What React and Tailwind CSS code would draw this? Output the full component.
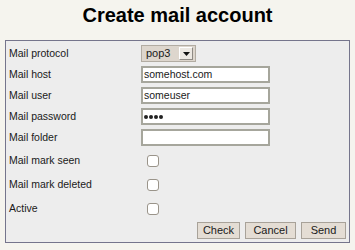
export default function App() {
    const textRows = [
        { label: 'Mail host', value: 'somehost.com' },
        { label: 'Mail user', value: 'someuser' },
        { label: 'Mail password', value: '••••', password: true },
        { label: 'Mail folder', value: '' },
    ];
    const checkRows = ['Mail mark seen', 'Mail mark deleted', 'Active'];

    return (
        <div className="w-[355px] h-[250px] bg-[#f5f4ee] font-['Liberation_Sans',Arial,sans-serif] text-[#1a1a1a] overflow-hidden">
            <h1 className="pt-[4px] h-[40px] text-center text-[20px] leading-[23px] font-bold text-black">Create mail account</h1>

            <div className="ml-[5px] w-[345px] h-[203px] border border-[#75758c] bg-[#ededed] flex flex-col">
                <div className="flex flex-col gap-[4px] pt-[4px]">
                    <div className="flex items-center h-[17px]">
                        <span className="w-[135px] pl-[3px] text-[10.5px]">Mail protocol</span>
                        <div className="flex items-center h-[17px] w-[55px] border border-[#b2aca2] bg-[#ddd6cd]">
                            <span className="flex-1 pl-[4px] text-[11px] leading-none">pop3</span>
                            <div className="w-[14px] h-[13px] mr-[2px] bg-[#ece8e2] border border-[#8e8a84] border-t-white border-l-white flex items-center justify-center">
                                <svg width="7" height="4" viewBox="0 0 7 4"><path d="M0 0h7L3.5 4z" fill="#111" /></svg>
                            </div>
                        </div>
                    </div>
                    {textRows.map(row => (
                        <div key={row.label} className="flex items-center h-[17px]">
                            <span className="w-[135px] pl-[3px] text-[10.5px]">{row.label}</span>
                            <div className="w-[129px] h-[17px] border-2 border-[#a6a69c] bg-white flex items-center pl-[1px]">
                                {row.password ? (
                                    <span className="flex gap-[1px]">
                                        {[0, 1, 2, 3].map(i => (
                                            <span key={i} className="w-[4px] h-[4px] rounded-full bg-[#222]"></span>
                                        ))}
                                    </span>
                                ) : (
                                    <span className="text-[10.5px] leading-none">{row.value}</span>
                                )}
                            </div>
                        </div>
                    ))}
                </div>

                <div className="flex flex-col pt-[3px]">
                    {checkRows.map(label => (
                        <div key={label} className="flex items-center h-[24px]">
                            <span className="w-[141px] pl-[3px] text-[10.5px]">{label}</span>
                            <div className="w-[12px] h-[12px] rounded-[3px] border border-[#9a948a] bg-white"></div>
                        </div>
                    ))}
                </div>

                <div className="flex justify-end gap-[5px] pr-[3px] pt-[1px]">
                    {[
                        { text: 'Check', w: 'w-[43px]' },
                        { text: 'Cancel', w: 'w-[51px]' },
                        { text: 'Send', w: 'w-[45px]' },
                    ].map(btn => (
                        <button key={btn.text} className={`${btn.w} h-[17px] border border-[#a8a299] bg-[#e4ddd4] text-[11px] leading-none text-[#1a1a1a]`}>
                            {btn.text}
                        </button>
                    ))}
                </div>
            </div>
        </div>
    );
}
